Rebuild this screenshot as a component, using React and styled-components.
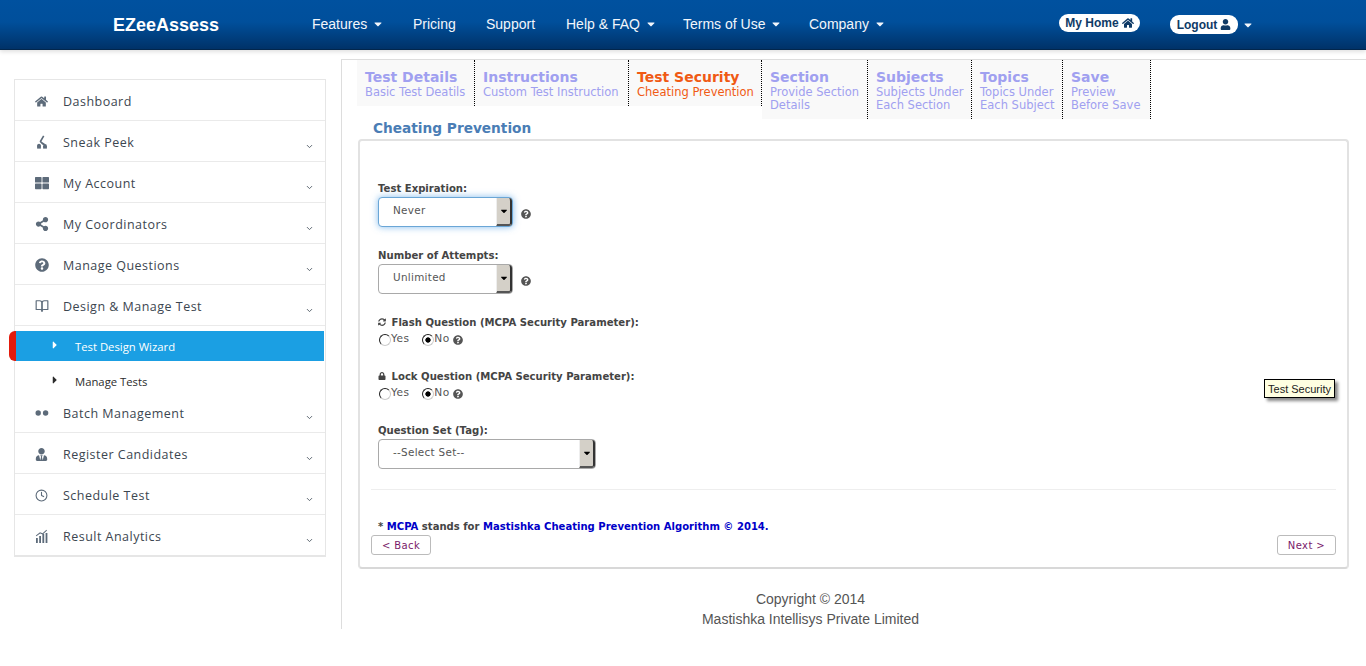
import React from "react";
import styled, { createGlobalStyle } from "styled-components";
import {
  FaHome,
  FaUser,
  FaThLarge,
  FaShareAlt,
  FaQuestionCircle,
  FaLock,
  FaCaretDown,
  FaCaretRight,
  FaUserTie,
  FaSyncAlt,
} from "react-icons/fa";
import { FiClock, FiChevronDown, FiBookOpen } from "react-icons/fi";

const GlobalStyle = createGlobalStyle`
  html, body {
    margin: 0;
    padding: 0;
    background: #fff;
    font-family: "Liberation Sans", Arial, sans-serif;
  }
  * { box-sizing: border-box; }
`;

const navItems = [
  { label: "Features", caret: true, width: 101 },
  { label: "Pricing", width: 73 },
  { label: "Support", width: 80 },
  { label: "Help & FAQ", caret: true, width: 117 },
  { label: "Terms of Use", caret: true, width: 126 },
  { label: "Company", caret: true, width: 90 },
];

const SneakIcon = () => (
  <svg width="14" height="14" viewBox="0 0 14 14" fill="#5d6b7a">
    <path d="M8 0.5 9.4 1.2 6.4 6.6C7.2 7.4 8.4 8 9.8 8.8L9.8 10 8 10C7 9 5.8 8.2 5 7.2L4.6 6.2Z" />
    <circle cx="4" cy="10.6" r="1.9" />
    <circle cx="10" cy="11" r="1.9" />
    <rect x="2.1" y="10.6" width="3.8" height="3" />
    <rect x="8.1" y="11" width="3.8" height="2.6" />
  </svg>
);

const DotsIcon = () => (
  <svg width="14" height="14" viewBox="0 0 14 14" fill="#5d6b7a">
    <circle cx="3.2" cy="7" r="2.7" />
    <circle cx="10.6" cy="7" r="2.7" />
  </svg>
);

const ChartIcon = () => (
  <svg width="14" height="14" viewBox="0 0 14 14" fill="#5d6b7a">
    <rect x="1" y="9" width="1.8" height="5" />
    <rect x="4.2" y="7" width="1.8" height="7" />
    <rect x="7.4" y="5" width="1.8" height="9" />
    <rect x="10.6" y="4" width="1.8" height="10" />
    <path d="M.8 6.5 5 3.2l2.6 1L11.4.8l.6.6-4.2 4-2.6-1L1.3 7.2Z" />
  </svg>
);

const sideTop = [
  { label: "Dashboard", icon: <FaHome size={13} />, plain: true },
  { label: "Sneak Peek", icon: <SneakIcon /> },
  { label: "My Account", icon: <FaThLarge size={14} /> },
  { label: "My Coordinators", icon: <FaShareAlt size={14} /> },
  { label: "Manage Questions", icon: <FaQuestionCircle size={14} /> },
  { label: "Design & Manage Test", icon: <FiBookOpen size={14} /> },
];

const sideBottom = [
  { label: "Batch Management", icon: <DotsIcon /> },
  { label: "Register Candidates", icon: <FaUserTie size={13} /> },
  { label: "Schedule Test", icon: <FiClock size={13} /> },
  { label: "Result Analytics", icon: <ChartIcon /> },
];

const tabs = [
  { title: "Test Details", lines: ["Basic Test Deatils"], width: 118 },
  { title: "Instructions", lines: ["Custom Test Instruction"], width: 154 },
  { title: "Test Security", lines: ["Cheating Prevention"], width: 133, active: true },
  { title: "Section", lines: ["Provide Section", "Details"], width: 106 },
  { title: "Subjects", lines: ["Subjects Under", "Each Section"], width: 104 },
  { title: "Topics", lines: ["Topics Under", "Each Subject"], width: 91 },
  { title: "Save", lines: ["Preview", "Before Save"], width: 88 },
];

function SideRow({ item }) {
  return (
    <SideItem>
      <SideIcon>{item.icon}</SideIcon>
      <span>{item.label}</span>
      {!item.plain && (
        <SideChevron>
          <FiChevronDown size={9} strokeWidth={2.5} />
        </SideChevron>
      )}
    </SideItem>
  );
}

function Dropdown({ value, width, focused }) {
  return (
    <SelectBox $width={width} $focused={focused}>
      <SelectValue>{value}</SelectValue>
      <SelectArrow>
        <FaCaretDown size={10} />
      </SelectArrow>
    </SelectBox>
  );
}

function YesNo({ name }) {
  return (
    <RadioRow>
      <RadioLabel>
        <Radio type="radio" name={name} />
        Yes
      </RadioLabel>
      <RadioLabel>
        <Radio type="radio" name={name} defaultChecked />
        No
      </RadioLabel>
      <Help>
        <FaQuestionCircle size={10} />
      </Help>
    </RadioRow>
  );
}

export default function App() {
  return (
    <>
      <GlobalStyle />
      <Header>
        <Brand>EZeeAssess</Brand>
        <Nav>
          {navItems.map((n) => (
            <NavLink key={n.label} $width={n.width}>
              {n.label}
              {n.caret && <FaCaretDown size={12} />}
            </NavLink>
          ))}
        </Nav>
        <HomePill>
          My Home <FaHome size={12} />
        </HomePill>
        <LogoutPill>
          Logout <FaUser size={11} />
        </LogoutPill>
        <UserCaret>
          <FaCaretDown size={12} />
        </UserCaret>
      </Header>
      <Page>
        <Sidebar>
          <SideMenu>
            {sideTop.map((s) => (
              <SideRow key={s.label} item={s} />
            ))}
            <SubList>
              <SubItem $active>
                <SubArrow>
                  <FaCaretRight size={12} />
                </SubArrow>
                Test Design Wizard
              </SubItem>
              <SubItem>
                <SubArrow>
                  <FaCaretRight size={12} />
                </SubArrow>
                Manage Tests
              </SubItem>
            </SubList>
            {sideBottom.map((s) => (
              <SideRow key={s.label} item={s} />
            ))}
          </SideMenu>
        </Sidebar>
        <Main>
          <Tabs>
            {tabs.map((t) => (
              <Tab key={t.title} $active={t.active} $width={t.width}>
                <TabTitle>{t.title}</TabTitle>
                {t.lines.map((l) => (
                  <TabLine key={l}>{l}</TabLine>
                ))}
              </Tab>
            ))}
          </Tabs>
          <Heading>Cheating Prevention</Heading>
          <Panel>
            <FormArea>
              <Label>Test Expiration:</Label>
              <SelectRow>
                <Dropdown value="Never" width={135} focused />
                <Help>
                  <FaQuestionCircle size={10} />
                </Help>
              </SelectRow>
              <Label $gap={22}>Number of Attempts:</Label>
              <SelectRow>
                <Dropdown value="Unlimited" width={135} />
                <Help>
                  <FaQuestionCircle size={10} />
                </Help>
              </SelectRow>
              <Label $gap={22}>
                <FaSyncAlt size={8} /> Flash Question (MCPA Security Parameter):
              </Label>
              <YesNo name="flash" />
              <Label $gap={25}>
                <FaLock size={8} /> Lock Question (MCPA Security Parameter):
              </Label>
              <YesNo name="lock" />
              <Label $gap={25}>Question Set (Tag):</Label>
              <SelectRow>
                <Dropdown value="--Select Set--" width={218} />
              </SelectRow>
            </FormArea>
            <Divider />
            <Note>
              * <b>MCPA</b> stands for <b>Mastishka Cheating Prevention Algorithm © 2014.</b>
            </Note>
            <Buttons>
              <NavButton $width={60}>&lt; Back</NavButton>
              <NavButton $width={59}>Next &gt;</NavButton>
            </Buttons>
            <Tooltip>Test Security</Tooltip>
          </Panel>
          <Footer>
            Copyright © 2014
            <br />
            Mastishka Intellisys Private Limited
          </Footer>
        </Main>
      </Page>
    </>
  );
}

const Header = styled.header`
  height: 50px;
  display: flex;
  align-items: center;
  padding-left: 113px;
  background: linear-gradient(to bottom, #00519f 0%, #004f9b 45%, #003268 100%);
  border-bottom: 1px solid #02264c;
  box-shadow: 0 2px 4px rgba(0, 0, 0, 0.12);
`;

const Brand = styled.div`
  width: 199px;
  margin-top: 1px;
  color: #fff;
  font-size: 18px;
  font-weight: 700;
`;

const Nav = styled.nav`
  display: flex;
  width: 747px;
  margin-top: -1px;
`;

const NavLink = styled.a`
  width: ${(p) => p.$width}px;
  flex: none;
  display: flex;
  align-items: center;
  gap: 5px;
  color: #f2f6fb;
  font-size: 14px;
  white-space: nowrap;
`;

const Pill = styled.a`
  display: flex;
  align-items: center;
  justify-content: center;
  gap: 3px;
  background: #fff;
  color: #0f3a66;
  font-size: 12px;
  font-weight: 700;
  border-radius: 9px;
`;

const HomePill = styled(Pill)`
  width: 81px;
  height: 18px;
  margin-top: -3px;
`;

const LogoutPill = styled(Pill)`
  width: 68px;
  height: 19px;
  margin-left: 30px;
`;

const UserCaret = styled.span`
  display: flex;
  margin-left: 4px;
  color: #f2f6fb;
`;

const Page = styled.div`
  display: flex;
  align-items: flex-start;
`;

const Sidebar = styled.aside`
  width: 341px;
  flex: none;
  padding: 29px 15px 0 14px;
`;

const SideMenu = styled.div`
  width: 312px;
  border: 1px solid #e6e6e6;
  border-bottom-width: 2px;
  font-family: "Open Sans", sans-serif;
`;

const SideItem = styled.div`
  position: relative;
  height: 41px;
  display: flex;
  align-items: center;
  padding: 2px 0 0 20px;
  border-bottom: 1px solid #eaeaea;
  color: #3c4650;
  font-size: 12.5px;
  letter-spacing: 0.48px;
  &:last-child {
    border-bottom: 0;
    height: 40px;
  }
`;

const SideIcon = styled.span`
  width: 28px;
  flex: none;
  display: flex;
  align-items: center;
  color: #5d6b7a;
`;

const SideChevron = styled.span`
  position: absolute;
  right: 11px;
  top: 21px;
  display: flex;
  color: #55606b;
`;

const SubList = styled.div`
  padding-top: 5px;
`;

const SubItem = styled.div`
  display: flex;
  align-items: center;
  height: ${(p) => (p.$active ? "30px" : "31px")};
  margin: ${(p) => (p.$active ? "0 1px 0 -6px" : "0")};
  padding: ${(p) => (p.$active ? "0 0 0 33px" : "9px 0 0 34px")};
  background: ${(p) => (p.$active ? "#1b9fe3" : "transparent")};
  border-left: ${(p) => (p.$active ? "7px solid #e31b0c" : "0")};
  border-radius: ${(p) => (p.$active ? "6px 0 0 6px" : "0")};
  color: ${(p) => (p.$active ? "#fff" : "#2b2b2b")};
  font-size: 11.3px;
`;

const SubArrow = styled.span`
  width: 26px;
  flex: none;
  display: flex;
  margin-top: -3px;
`;

const Main = styled.main`
  flex: 1;
  min-width: 0;
  height: 570px;
  margin-top: 9px;
  padding-left: 15px;
  border-left: 1px solid #ddd;
  border-top: 1px solid #ddd;
  position: relative;
`;

const Tabs = styled.div`
  display: flex;
  align-items: flex-start;
  height: 59px;
  font-family: "DejaVu Sans", Verdana, sans-serif;
`;

const Tab = styled.div`
  flex: none;
  width: ${(p) => p.$width}px;
  padding: 9px 0 7px 8px;
  background: #f9f9f9;
  border-right: 1px dotted #000;
  color: ${(p) => (p.$active ? "#f05a14" : "#a0a0f0")};
`;

const TabTitle = styled.div`
  font-size: 14px;
  font-weight: 700;
  line-height: 17px;
`;

const TabLine = styled.div`
  font-size: 11.5px;
  line-height: 13px;
  white-space: nowrap;
`;

const Heading = styled.h2`
  margin: 0;
  padding: 1px 0 0 16px;
  height: 20px;
  color: #4a7db5;
  font: 700 13.7px/17px "DejaVu Sans", Verdana, sans-serif;
`;

const Panel = styled.section`
  position: relative;
  width: 991px;
  margin-left: 1px;
  padding: 41px 11px 12px 11px;
  border: 2px solid #e2e2e2;
  border-bottom-color: #d8d8d8;
  border-radius: 4px;
  font-family: "DejaVu Sans", Verdana, sans-serif;
`;

const FormArea = styled.div`
  padding-left: 7px;
`;

const Label = styled.div`
  display: flex;
  align-items: center;
  gap: 2px;
  height: 12px;
  margin-top: ${(p) => p.$gap || 0}px;
  margin-bottom: 3px;
  color: #444;
  font-size: 10.1px;
  font-weight: 700;
  white-space: pre;
`;

const SelectRow = styled.div`
  display: flex;
  align-items: center;
  gap: 8px;
`;

const SelectBox = styled.div`
  width: ${(p) => p.$width}px;
  height: 30px;
  display: flex;
  border: 1px solid ${(p) => (p.$focused ? "#6aa6d6" : "#a9a9a9")};
  border-radius: 4px;
  background: #fff;
  box-shadow: ${(p) => (p.$focused ? "0 0 7px rgba(80, 160, 230, 0.7)" : "none")};
`;

const SelectValue = styled.div`
  flex: 1;
  padding: 6px 0 0 14px;
  color: #555;
  font-size: 10.4px;
  letter-spacing: 0.3px;
`;

const SelectArrow = styled.div`
  width: 16px;
  display: flex;
  align-items: center;
  justify-content: center;
  background: #d4d0c8;
  border-left: 1px solid #eee;
  border-right: 2px solid #333;
  border-bottom: 2px solid #555;
  border-radius: 0 3px 3px 0;
  color: #000;
`;

const Help = styled.span`
  display: flex;
  margin-top: 3px;
  color: #555;
`;

const RadioRow = styled.div`
  display: flex;
  align-items: center;
  height: 14px;
  margin-top: 1px;
`;

const RadioLabel = styled.label`
  display: flex;
  align-items: center;
  margin-right: 12px;
  color: #555;
  font-size: 10.6px;
  letter-spacing: 0.4px;
  &:nth-child(2) {
    margin-right: 3px;
  }
`;

const Radio = styled.input`
  appearance: none;
  width: 12px;
  height: 12px;
  margin: 3px 0 0 1px;
  border-radius: 50%;
  background: #fff;
  border: 1px solid #ccc;
  border-top-color: #222;
  border-left-color: #222;
  &:checked {
    background: radial-gradient(circle, #000 0 2.3px, #fff 3px);
  }
`;

const Divider = styled.hr`
  margin: 20px 0 31px;
  border: 0;
  border-top: 1px solid #eee;
`;

const Note = styled.div`
  height: 12px;
  margin-left: 7px;
  color: #444;
  font-size: 10.05px;
  font-weight: 700;
  line-height: 12px;
  b {
    color: #0000c8;
  }
`;

const Buttons = styled.div`
  display: flex;
  justify-content: space-between;
  margin-top: 2px;
`;

const NavButton = styled.button`
  width: ${(p) => p.$width}px;
  height: 20px;
  padding: 0;
  background: #fff;
  border: 1px solid #bbb;
  border-radius: 3px;
  color: #7a1a6a;
  font: 10px "DejaVu Sans", Verdana, sans-serif;
  letter-spacing: 0.4px;
`;

const Tooltip = styled.div`
  position: absolute;
  top: 238px;
  right: 12px;
  width: 71px;
  height: 19px;
  display: flex;
  align-items: center;
  justify-content: center;
  background: #ffffe1;
  border: 1px solid #000;
  box-shadow: 3px 3px 3px #888;
  color: #222;
  font: 11px "Liberation Sans", Arial, sans-serif;
`;

const Footer = styled.footer`
  width: 907px;
  margin: 20px 0 0 0;
  color: #555;
  font-size: 14px;
  line-height: 20px;
  text-align: center;
`;
